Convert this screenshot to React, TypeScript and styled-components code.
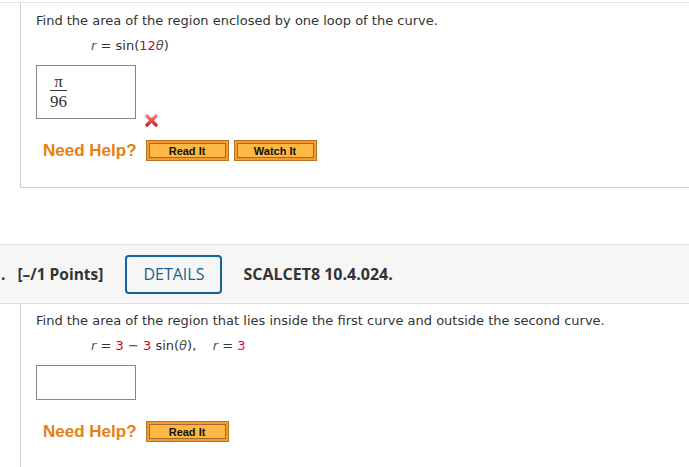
import React from "react";
import styled, { createGlobalStyle } from "styled-components";

const Global = createGlobalStyle`
  html, body { margin: 0; padding: 0; background: #fff; }
  body { width: 689px; height: 467px; overflow: hidden; }
`;

const Page = styled.div`
  padding-top: 2px;
  font-family: "DejaVu Sans", Verdana, sans-serif;
  color: #333;
`;

const QuestionBox = styled.div<{ $bottom?: boolean; $h: number; $pt: number }>`
  margin-left: 20px;
  height: ${(p) => p.$h}px;
  box-sizing: border-box;
  border-left: 1px solid #cfcfcf;
  border-bottom: ${(p) => (p.$bottom ? "1px solid #cfcfcf" : "none")};
  padding: ${(p) => p.$pt}px 0 0 15px;
`;

const TopRule = styled.div`
  height: 1px;
  background: #e3e3e3;
`;

const Prompt = styled.div`
  font-size: 13px;
  line-height: 16px;
  color: #333;
`;

const Equation = styled.div`
  margin: 9px 0 0 55px;
  font-size: 13px;
  line-height: 16px;
  color: #333;
  white-space: pre;
`;

const Var = styled.span`
  font-style: italic;
  color: #555;
`;

const Num = styled.span<{ $c?: string }>`
  color: ${(p) => p.$c || "#d0021b"};
`;

const AnswerRow = styled.div`
  display: flex;
  align-items: flex-end;
  margin-top: 11px;
`;

const AnswerBox = styled.div<{ $h: number }>`
  width: 100px;
  height: ${(p) => p.$h}px;
  box-sizing: border-box;
  border: 1px solid #868686;
  background: #fff;
  padding: 6px 0 0 13px;
`;

const Frac = styled.div`
  display: inline-flex;
  flex-direction: column;
  align-items: center;
  font-family: "Liberation Serif", "Times New Roman", serif;
  font-size: 17px;
  color: #333;
  line-height: 15px;
`;

const FracTop = styled.span`
  padding: 0 2px 1px;
  border-bottom: 1px solid #333;
  align-self: stretch;
  text-align: center;
`;

const FracBottom = styled.span`
  padding-top: 3px;
`;

const Cross = styled.svg`
  margin: 0 0 -8px 9px;
`;

const HelpRow = styled.div<{ $mt: number }>`
  display: flex;
  align-items: center;
  gap: 5px;
  margin: ${(p) => p.$mt}px 0 0 7px;
`;

const NeedHelp = styled.span`
  font-family: "Liberation Sans", Arial, sans-serif;
  font-weight: bold;
  font-size: 17px;
  color: #e8800f;
  margin-right: 4px;
`;

const HelpButton = styled.span`
  display: inline-flex;
  box-sizing: border-box;
  width: 83px;
  height: 21px;
  padding: 2px;
  border: 1px solid #b8731f;
  background: #f59a2c;
`;

const HelpLabel = styled.span`
  flex: 1;
  display: flex;
  align-items: center;
  justify-content: center;
  border: 1px solid #a4682c;
  background: #fdb845;
  font-family: "Liberation Sans", Arial, sans-serif;
  font-weight: bold;
  font-size: 11px;
  color: #111;
`;

const Spacer = styled.div`
  height: 56px;
`;

const HeaderBand = styled.div`
  height: 60px;
  box-sizing: border-box;
  border-top: 1px solid #e0e0e0;
  border-bottom: 1px solid #e0e0e0;
  background: #f6f6f6;
  display: flex;
  align-items: center;
  font-family: "Open Sans", sans-serif;
  font-size: 16px;
  color: #333;
  padding-left: 1px;
`;

const Points = styled.span`
  font-weight: bold;
  font-size: 15.5px;
  white-space: pre;
  display: flex;
  gap: 12px;
`;

const Details = styled.span`
  margin-left: 22px;
  width: 97px;
  height: 39px;
  box-sizing: border-box;
  border: 2px solid #12659a;
  border-radius: 4px;
  display: flex;
  align-items: center;
  justify-content: center;
  color: #1a5f8f;
  font-size: 16px;
`;

const Code = styled.span`
  margin-left: 21px;
  font-weight: bold;
`;

function RedX() {
  return (
    <Cross width="13" height="13" viewBox="0 0 13 13">
      <defs>
        <linearGradient id="xg" x1="0" y1="0" x2="0" y2="1">
          <stop offset="0" stopColor="#ff7a7a" />
          <stop offset="1" stopColor="#d9262c" />
        </linearGradient>
      </defs>
      <path d="M2 2 L11 11 M11 2 L2 11" stroke="url(#xg)" strokeWidth="3.4" strokeLinecap="round" />
    </Cross>
  );
}

function Help({ watch, mt }: { watch?: boolean; mt: number }) {
  return (
    <HelpRow $mt={mt}>
      <NeedHelp>Need Help?</NeedHelp>
      <HelpButton>
        <HelpLabel>Read It</HelpLabel>
      </HelpButton>
      {watch && (
        <HelpButton>
          <HelpLabel>Watch It</HelpLabel>
        </HelpButton>
      )}
    </HelpRow>
  );
}

export default function App() {
  return (
    <Page>
      <Global />
      <TopRule />
      <QuestionBox $bottom $h={185} $pt={10}>
        <Prompt>Find the area of the region enclosed by one loop of the curve.</Prompt>
        <Equation>
          <Var>r</Var> = sin(<Num>12</Num><Var>θ</Var>)
        </Equation>
        <AnswerRow>
          <AnswerBox $h={54}>
            <Frac>
              <FracTop>π</FracTop>
              <FracBottom>96</FracBottom>
            </Frac>
          </AnswerBox>
          <RedX />
        </AnswerRow>
        <Help watch mt={21} />
      </QuestionBox>
      <Spacer />
      <HeaderBand>
        <Points>
          <span>.</span>
          <span>[–/1 Points]</span>
        </Points>
        <Details>DETAILS</Details>
        <Code>SCALCET8 10.4.024.</Code>
      </HeaderBand>
      <QuestionBox $h={170} $pt={9}>
        <Prompt>Find the area of the region that lies inside the first curve and outside the second curve.</Prompt>
        <Equation>
          <Var>r</Var> = <Num>3</Num> − <Num>3</Num> sin(<Var>θ</Var>),{"    "}<Var>r</Var> = <Num $c="#e0006a">3</Num>
        </Equation>
        <AnswerRow>
          <AnswerBox $h={35} />
        </AnswerRow>
        <Help mt={21} />
      </QuestionBox>
    </Page>
  );
}
